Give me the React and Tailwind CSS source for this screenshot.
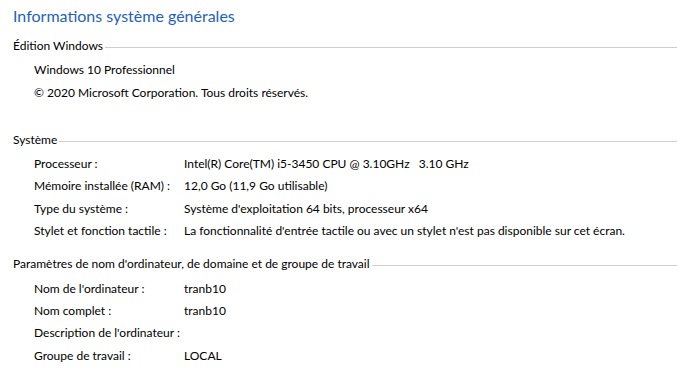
import React from "react";

const sections = [
  {
    title: "Édition Windows",
    rows: [
      { text: "Windows 10 Professionnel" },
      { text: "© 2020 Microsoft Corporation. Tous droits réservés." },
    ],
  },
  {
    title: "Système",
    rows: [
      { label: "Processeur :", value: "Intel(R) Core(TM) i5-3450 CPU @ 3.10GHz   3.10 GHz" },
      { label: "Mémoire installée (RAM) :", value: "12,0 Go (11,9 Go utilisable)" },
      { label: "Type du système :", value: "Système d'exploitation 64 bits, processeur x64" },
      {
        label: "Stylet et fonction tactile :",
        value: "La fonctionnalité d'entrée tactile ou avec un stylet n'est pas disponible sur cet écran.",
      },
    ],
  },
  {
    title: "Paramètres de nom d'ordinateur, de domaine et de groupe de travail",
    rows: [
      { label: "Nom de l'ordinateur :", value: "tranb10" },
      { label: "Nom complet :", value: "tranb10" },
      { label: "Description de l'ordinateur :", value: "" },
      { label: "Groupe de travail :", value: "LOCAL" },
    ],
  },
];

const Section = ({ title, rows, className }) => (
  <div className={className}>
    <div className="flex h-[20px] items-center">
      <span className="whitespace-nowrap">{title}</span>
      <div className="ml-[2px] mt-[3px] h-px flex-1 bg-[#cfcfcf]" />
    </div>
    <div className="mt-[3px] pl-[21px]">
      {rows.map((row, i) => (
        <div key={i} className="flex h-[22.4px] items-center whitespace-nowrap">
          {row.label !== undefined ? (
            <>
              <span className="w-[150px] shrink-0 overflow-visible">{row.label}</span>
              <span style={{ whiteSpace: "pre" }}>{row.value}</span>
            </>
          ) : (
            <span>{row.text}</span>
          )}
        </div>
      ))}
    </div>
  </div>
);

const App = () => {
  return (
    <div className="h-[377px] w-[678px] overflow-hidden bg-white pl-[13px] pr-px font-['Lato',sans-serif] text-[12px] text-black">
      <h1 className="h-[32px] text-[16px] leading-[32px] font-normal text-[#1f5fc3]">
        Informations système générales
      </h1>
      <Section {...sections[0]} className="mt-[4px]" />
      <Section {...sections[1]} className="mt-[26px]" />
      <Section {...sections[2]} className="mt-[12px]" />
    </div>
  );
};

export default App;
